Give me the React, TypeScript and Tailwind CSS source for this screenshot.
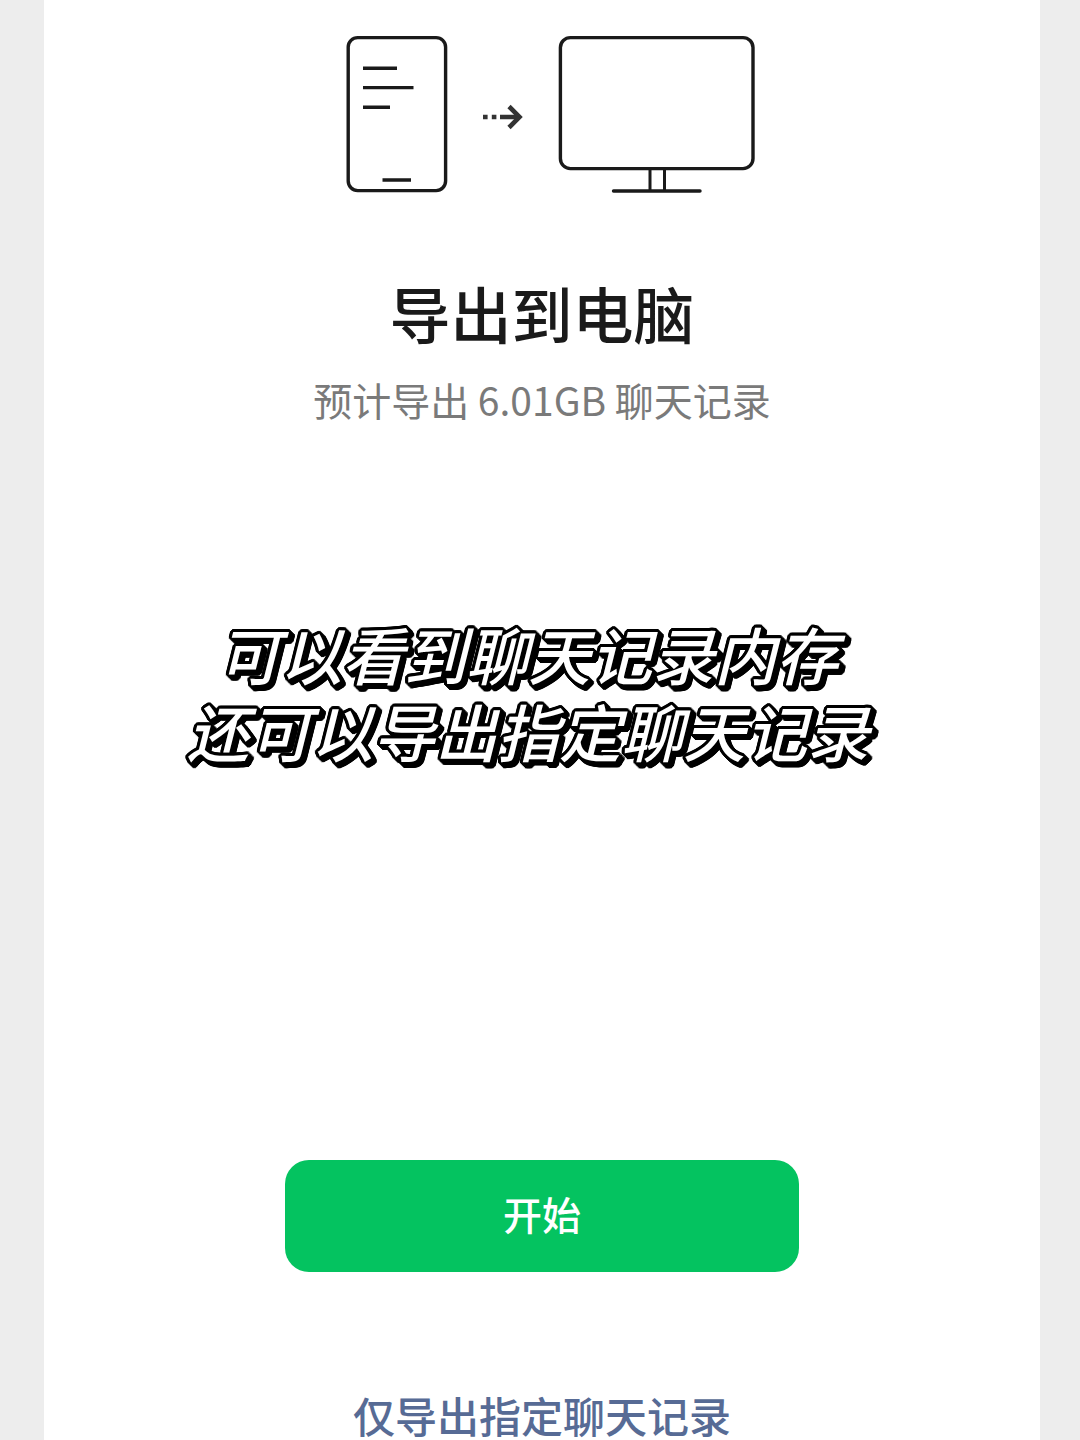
import React from 'react';

const INK = '#1a1a1a';

const PhoneIcon: React.FC = () => (
  <svg width="102" height="158" viewBox="0 0 102 158" fill="none" stroke={INK} strokeWidth="3.4" aria-hidden="true">
    <rect x="2.2" y="2.6" width="97.4" height="153" rx="9.5" />
    <path d="M17 33.2h34M17 52.6h50.5M17 72.2h27M36.5 145h28.5" />
  </svg>
);

const ArrowIcon: React.FC = () => (
  <svg width="42" height="158" viewBox="0 0 42 158" fill="none" stroke="#333" strokeWidth="4.6" aria-hidden="true">
    <path d="M1 82h4.6M9.8 82h4.6M18 82H37" />
    <path d="M27 71.5L37.5 82L27 92.5" />
  </svg>
);

const MonitorIcon: React.FC = () => (
  <svg width="198" height="158" viewBox="0 0 198 158" fill="none" stroke={INK} strokeWidth="3.4" aria-hidden="true">
    <rect x="2.4" y="2.6" width="192.6" height="131" rx="10" />
    <path d="M92 134v21M106.5 134v21" strokeWidth="3" />
    <path d="M55.5 156h86.5" strokeLinecap="round" />
  </svg>
);

const App: React.FC = () => {
  return (
    <div className="min-h-screen bg-[#ededed] pl-11 pr-10 font-['Noto_Sans_CJK_SC',sans-serif]">
      <main className="flex min-h-screen flex-col items-center bg-white pt-[35px]">
        <div className="flex items-center gap-[34px] pl-[18px]">
          <PhoneIcon />
          <ArrowIcon />
          <MonitorIcon />
        </div>

        <h1 className="mt-20 text-[61px] leading-[80px] font-medium text-[#1a1a1a]">导出到电脑</h1>
        <p className="mt-[18px] text-[39px] leading-[56px] text-[#7a7a7a]">预计导出 6.01GB 聊天记录</p>

        {/* ring of shadows gives the rounded outline, drop-shadow the solid offset behind it */}
        <p className="mt-[188px] pr-7 text-center text-[62px] leading-[77px] font-medium text-white italic drop-shadow-[3px_3px_0_black] [text-shadow:3px_0_0_black,-3px_0_0_black,0_3px_0_black,0_-3px_0_black,2px_2px_0_black,-2px_2px_0_black,2px_-2px_0_black,-2px_-2px_0_black,3px_1px_0_black,3px_-1px_0_black,-3px_1px_0_black,-3px_-1px_0_black,1px_3px_0_black,-1px_3px_0_black,1px_-3px_0_black,-1px_-3px_0_black]">
          可以看到聊天记录内存
          <br />
          还可以导出指定聊天记录
        </p>

        <button
          type="button"
          className="mt-auto h-28 w-[514px] max-w-full rounded-3xl bg-[#04c360] pb-1.5 text-[39px] font-medium text-white"
        >
          开始
        </button>
        <a href="#" className="mt-[118px] text-[42px] leading-[50px] font-medium text-[#576b95]">
          仅导出指定聊天记录
        </a>
      </main>
    </div>
  );
};

export default App;
